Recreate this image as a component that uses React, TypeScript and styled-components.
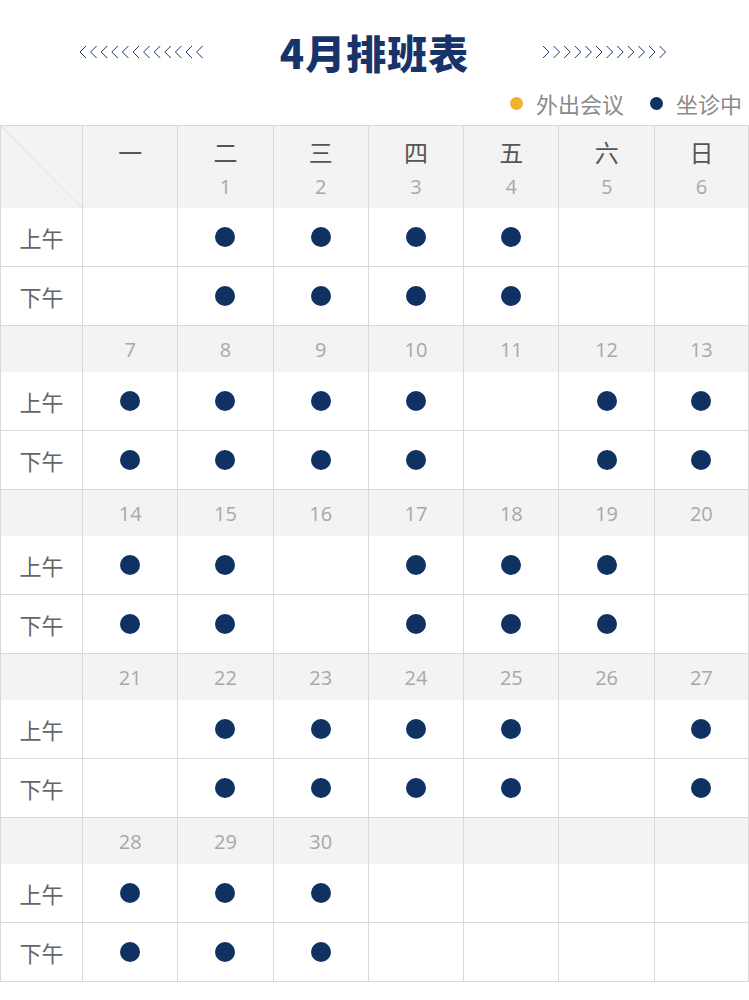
import React from "react";
import styled, { createGlobalStyle } from "styled-components";

const GlobalStyle = createGlobalStyle`
  html, body {
    margin: 0;
    padding: 0;
    background: #ffffff;
  }
  body {
    font-family: "Noto Sans CJK SC", "Noto Sans", sans-serif;
  }
`;

const NAVY = "#0f3262";
const LINE = "#d9d9d9";
const GRAY_BG = "#f3f3f3";

const Page = styled.div`
  width: 749px;
  overflow: hidden;
  background: #fff;
`;

const Header = styled.header`
  height: 125px;
  display: flex;
  flex-direction: column;
`;

const TitleRow = styled.div`
  margin-top: 27px;
  height: 50px;
  display: flex;
  align-items: center;
  justify-content: center;
  gap: 73px;
`;

const Title = styled.h1`
  margin: 0;
  font-family: "Noto Sans CJK SC", sans-serif;
  font-weight: 900;
  font-size: 40px;
  line-height: 50px;
  letter-spacing: 1px;
  color: #17346a;
`;

const Legend = styled.div`
  margin-top: 11px;
  height: 30px;
  display: flex;
  align-items: center;
  justify-content: flex-end;
  padding-right: 7px;
  gap: 26px;
`;

const LegendItem = styled.div`
  display: flex;
  align-items: center;
  gap: 13px;
  font-size: 22px;
  line-height: 30px;
  color: #8a8a8a;
`;

const LegendDot = styled.span<{ $color: string }>`
  width: 13px;
  height: 13px;
  border-radius: 50%;
  background: ${(p) => p.$color};
`;

const Grid = styled.div`
  display: grid;
  width: 749px;
  box-sizing: border-box;
  grid-template-columns: 82px repeat(6, 95.3px) 94.2px;
  border-top: 1px solid ${LINE};
  border-left: 1px solid ${LINE};
`;

const Corner = styled.div`
  height: 82px;
  background-color: ${GRAY_BG};
  background-image: linear-gradient(
    to top right,
    transparent calc(50% - 0.6px),
    #dedede 50%,
    transparent calc(50% + 0.6px)
  );
  border-right: 1px solid ${LINE};
`;

const WeekHead = styled.div`
  height: 82px;
  background: ${GRAY_BG};
  border-right: 1px solid ${LINE};
  display: flex;
  flex-direction: column;
  align-items: center;
  padding-top: 11px;
  box-sizing: border-box;
`;

const WeekDay = styled.span`
  font-size: 24px;
  line-height: 30px;
  height: 30px;
  color: #555;
`;

const HeadDate = styled.span`
  font-family: "Open Sans", "Noto Sans", sans-serif;
  font-size: 20px;
  line-height: 30px;
  height: 30px;
  margin-top: 5px;
  color: #a8a8a8;
`;

const DateCell = styled.div`
  height: 46px;
  background: ${GRAY_BG};
  border-right: 1px solid ${LINE};
  display: flex;
  align-items: center;
  justify-content: center;
  font-family: "Open Sans", "Noto Sans", sans-serif;
  font-size: 20px;
  color: #a8a8a8;
`;

const LabelCell = styled.div`
  height: 58px;
  border-right: 1px solid ${LINE};
  border-bottom: 1px solid ${LINE};
  display: flex;
  align-items: center;
  justify-content: center;
  font-size: 22px;
  color: #666;
`;

const SlotCell = styled.div`
  height: 58px;
  border-right: 1px solid ${LINE};
  border-bottom: 1px solid ${LINE};
  display: flex;
  align-items: center;
  justify-content: center;
`;

const Dot = styled.span`
  width: 20px;
  height: 20px;
  border-radius: 50%;
  background: ${NAVY};
`;

const Chevrons: React.FC<{ dir: "left" | "right" }> = ({ dir }) => {
  const items = Array.from({ length: 12 }, (_, i) => i);
  const pitch = 10.6;
  return (
    <svg width="128" height="14" viewBox="0 0 128 14" aria-hidden="true">
      {items.map((i) => {
        const x = 1 + i * pitch;
        const pts =
          dir === "left"
            ? `${x + 6},1 ${x},7 ${x + 6},13`
            : `${x},1 ${x + 6},7 ${x},13`;
        return (
          <polyline
            key={i}
            points={pts}
            fill="none"
            stroke="#1b3a6c"
            strokeWidth="1"
          />
        );
      })}
    </svg>
  );
};

type Day = { date?: number; on: boolean };

const weekdays = ["一", "二", "三", "四", "五", "六", "日"];

const onDates = new Set([
  1, 2, 3, 4, 7, 8, 9, 10, 12, 13, 14, 15, 17, 18, 19, 22, 23, 24, 25, 27, 28,
  29, 30,
]);

const buildWeeks = (): Day[][] => {
  const weeks: Day[][] = [];
  let week: Day[] = [{ on: false }];
  for (let d = 1; d <= 30; d++) {
    week.push({ date: d, on: onDates.has(d) });
    if (week.length === 7) {
      weeks.push(week);
      week = [];
    }
  }
  while (week.length < 7) week.push({ on: false });
  weeks.push(week);
  return weeks;
};

const weeks = buildWeeks();

const SlotRow: React.FC<{ label: string; days: Day[] }> = ({ label, days }) => (
  <>
    <LabelCell>{label}</LabelCell>
    {days.map((d, i) => (
      <SlotCell key={i}>{d.on ? <Dot /> : null}</SlotCell>
    ))}
  </>
);

export default function App() {
  return (
    <Page>
      <GlobalStyle />
      <Header>
        <TitleRow>
          <Chevrons dir="left" />
          <Title>4月排班表</Title>
          <Chevrons dir="right" />
        </TitleRow>
        <Legend>
          <LegendItem>
            <LegendDot $color="#f0b12b" />
            外出会议
          </LegendItem>
          <LegendItem>
            <LegendDot $color={NAVY} />
            坐诊中
          </LegendItem>
        </Legend>
      </Header>
      <Grid>
        {weeks.map((days, wi) => (
          <React.Fragment key={wi}>
            {wi === 0 ? (
              <>
                <Corner />
                {days.map((d, i) => (
                  <WeekHead key={i}>
                    <WeekDay>{weekdays[i]}</WeekDay>
                    {d.date ? <HeadDate>{d.date}</HeadDate> : null}
                  </WeekHead>
                ))}
              </>
            ) : (
              <>
                <DateCell />
                {days.map((d, i) => (
                  <DateCell key={i}>{d.date ?? ""}</DateCell>
                ))}
              </>
            )}
            <SlotRow label="上午" days={days} />
            <SlotRow label="下午" days={days} />
          </React.Fragment>
        ))}
      </Grid>
    </Page>
  );
}
